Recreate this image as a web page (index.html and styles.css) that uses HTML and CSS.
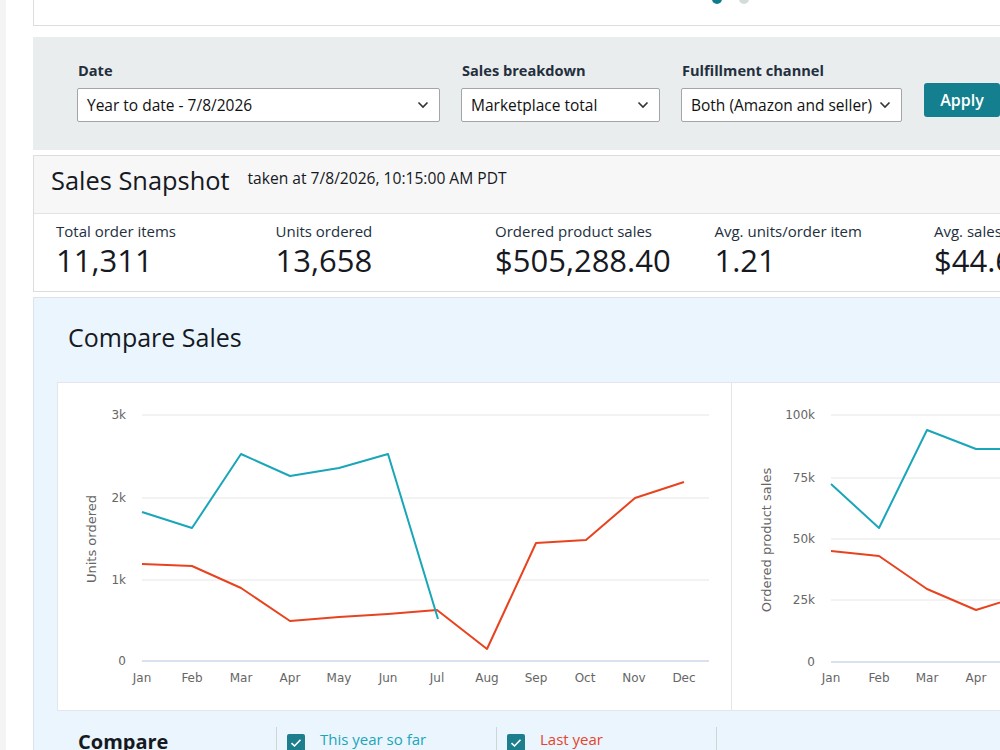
FILE: index.html
```html
<!DOCTYPE html>
<html lang="en">
<head>
    <meta charset="UTF-8">
    <meta name="viewport" content="width=device-width, initial-scale=1.0">
    <title>Business Reports - Sales Dashboard</title>
    <link rel="stylesheet" href="styles.css">
</head>
<body>
    <div class="rail"></div>
    <main class="page">
        <div class="promo">
            <div class="dots">
                <span class="dot active"></span>
                <span class="dot"></span>
            </div>
        </div>

        <div class="filters">
            <div class="field">
                <label>Date</label>
                <div class="select date-select">
                    <span>Year to date - 7/8/2026</span>
                    <svg width="12" height="8" viewBox="0 0 12 8"><path d="M1.5 1.5 6 6l4.5-4.5" fill="none" stroke="#333" stroke-width="1.6"/></svg>
                </div>
            </div>
            <div class="field">
                <label>Sales breakdown</label>
                <div class="select breakdown-select">
                    <span>Marketplace total</span>
                    <svg width="12" height="8" viewBox="0 0 12 8"><path d="M1.5 1.5 6 6l4.5-4.5" fill="none" stroke="#333" stroke-width="1.6"/></svg>
                </div>
            </div>
            <div class="field">
                <label>Fulfillment channel</label>
                <div class="select channel-select">
                    <span>Both (Amazon and seller)</span>
                    <svg width="12" height="8" viewBox="0 0 12 8"><path d="M1.5 1.5 6 6l4.5-4.5" fill="none" stroke="#333" stroke-width="1.6"/></svg>
                </div>
            </div>
            <button class="apply">Apply</button>
        </div>

        <section class="snapshot">
            <div class="snapshot-head">
                <h2>Sales Snapshot</h2>
                <span class="taken">taken at 7/8/2026, 10:15:00 AM PDT</span>
            </div>
            <div class="metrics">
                <div class="metric">
                    <div class="metric-label">Total order items</div>
                    <div class="metric-value">11,311</div>
                </div>
                <div class="metric">
                    <div class="metric-label">Units ordered</div>
                    <div class="metric-value">13,658</div>
                </div>
                <div class="metric">
                    <div class="metric-label">Ordered product sales</div>
                    <div class="metric-value">$505,288.40</div>
                </div>
                <div class="metric">
                    <div class="metric-label">Avg. units/order item</div>
                    <div class="metric-value">1.21</div>
                </div>
                <div class="metric">
                    <div class="metric-label">Avg. sales/order item</div>
                    <div class="metric-value">$44.67</div>
                </div>
            </div>
        </section>

        <section class="compare">
            <h2>Compare Sales</h2>
            <div class="charts">
                <div class="chart">
                    <svg width="673" height="327" viewBox="0 0 673 327">
                        <g class="grid">
                            <line x1="84" y1="32" x2="651" y2="32"/>
                            <line x1="84" y1="115" x2="651" y2="115"/>
                            <line x1="84" y1="197" x2="651" y2="197"/>
                        </g>
                        <line class="axis" x1="84" y1="278" x2="651" y2="278"/>
                        <g class="ylabels">
                            <text x="68" y="36">3k</text>
                            <text x="68" y="119">2k</text>
                            <text x="68" y="201">1k</text>
                            <text x="68" y="282">0</text>
                        </g>
                        <text class="ytitle" transform="translate(38 156) rotate(-90)">Units ordered</text>
                        <g class="xlabels">
                            <text x="84" y="299">Jan</text>
                            <text x="134" y="299">Feb</text>
                            <text x="183" y="299">Mar</text>
                            <text x="232" y="299">Apr</text>
                            <text x="281" y="299">May</text>
                            <text x="330" y="299">Jun</text>
                            <text x="379" y="299">Jul</text>
                            <text x="429" y="299">Aug</text>
                            <text x="478" y="299">Sep</text>
                            <text x="527" y="299">Oct</text>
                            <text x="576" y="299">Nov</text>
                            <text x="626" y="299">Dec</text>
                        </g>
                        <polyline class="series last" points="84,181 134,183 183,205 232,238 281,234 330,231 379,227 429,266 478,160 528,157 577,115 626,99"/>
                        <polyline class="series current" points="84,129 134,145 183,71 232,93 281,85 330,71 380,236"/>
                    </svg>
                </div>
                <div class="chart">
                    <svg width="673" height="327" viewBox="0 0 673 327">
                        <g class="grid">
                            <line x1="99" y1="32" x2="666" y2="32"/>
                            <line x1="99" y1="95" x2="666" y2="95"/>
                            <line x1="99" y1="156" x2="666" y2="156"/>
                            <line x1="99" y1="217" x2="666" y2="217"/>
                        </g>
                        <line class="axis" x1="99" y1="279" x2="666" y2="279"/>
                        <g class="ylabels">
                            <text x="83" y="36">100k</text>
                            <text x="83" y="99">75k</text>
                            <text x="83" y="160">50k</text>
                            <text x="83" y="221">25k</text>
                            <text x="83" y="283">0</text>
                        </g>
                        <text class="ytitle" transform="translate(39 157) rotate(-90)">Ordered product sales</text>
                        <g class="xlabels">
                            <text x="99" y="299">Jan</text>
                            <text x="147" y="299">Feb</text>
                            <text x="195" y="299">Mar</text>
                            <text x="244" y="299">Apr</text>
                            <text x="292" y="299">May</text>
                            <text x="340" y="299">Jun</text>
                            <text x="389" y="299">Jul</text>
                            <text x="437" y="299">Aug</text>
                            <text x="485" y="299">Sep</text>
                            <text x="534" y="299">Oct</text>
                            <text x="582" y="299">Nov</text>
                            <text x="630" y="299">Dec</text>
                        </g>
                        <polyline class="series last" points="99,168 147,173 195,206 244,227 292,212 340,200 389,228 437,262 485,158 534,150 582,120 630,105"/>
                        <polyline class="series current" points="99,101 147,145 195,47 244,66 292,66 340,80 389,235"/>
                    </svg>
                </div>
            </div>

            <div class="compare-row">
                <div class="compare-title">Compare</div>
                <label class="option current-year">
                    <span class="check"><svg width="12" height="10" viewBox="0 0 12 10"><path d="M1.5 5.2 4.5 8 10.5 1.8" fill="none" stroke="#fff" stroke-width="1.6"/></svg></span>
                    <span>This year so far</span>
                </label>
                <label class="option last-year">
                    <span class="check"><svg width="12" height="10" viewBox="0 0 12 10"><path d="M1.5 5.2 4.5 8 10.5 1.8" fill="none" stroke="#fff" stroke-width="1.6"/></svg></span>
                    <span>Last year</span>
                </label>
                <div class="option"></div>
            </div>
        </section>
    </main>
</body>
</html>
```

FILE: styles.css
```css
body {
    font-family: 'Open Sans', sans-serif;
    margin: 0;
    padding: 0;
    background-color: #fff;
    color: #16191f;
    display: flex;
    overflow: hidden;
    height: 750px;
}
.rail {
    width: 6px;
    flex: none;
    background-color: #f4f4f4;
}
.page {
    margin-left: 27px;
    width: 1100px;
    flex: none;
}

/* carousel card, scrolled mostly out of view */
.promo {
    display: flow-root;
    height: 25px;
    border: 1px solid #ddd;
    border-top: none;
    background: #fff;
}
.dots {
    display: flex;
    gap: 17px;
    margin-top: -6px;
    padding-left: 678px;
}
.dot {
    width: 10px;
    height: 10px;
    border-radius: 50%;
    background-color: #d5dbdb;
}
.dot.active {
    background-color: #0e7c8c;
}

/* filter bar */
.filters {
    margin-top: 11px;
    background-color: #eaeded;
    height: 113px;
    box-sizing: border-box;
    padding: 23px 0 0 44px;
    display: flex;
    gap: 21px;
}
.field {
    display: flex;
    flex-direction: column;
    gap: 8px;
}
.field label {
    font-size: 14.6px;
    font-weight: 700;
    line-height: 20px;
    color: #232f3e;
    padding-left: 1px;
}
.select {
    height: 34px;
    box-sizing: border-box;
    border: 1px solid #a2a6a6;
    border-radius: 2px;
    background: #fff;
    display: flex;
    align-items: center;
    justify-content: space-between;
    padding: 0 10px 0 9px;
    font-size: 15.5px;
    color: #111;
}
.date-select { width: 363px; }
.breakdown-select { width: 199px; }
.channel-select { width: 221px; }
.apply {
    align-self: flex-start;
    margin-top: 23px;
    margin-left: 1px;
    height: 34px;
    width: 76px;
    border: none;
    border-radius: 3px;
    background-color: #147f8e;
    color: #fff;
    font-family: inherit;
    font-size: 16px;
    font-weight: 600;
}

/* snapshot */
.snapshot {
    margin-top: 5px;
    border: 1px solid #ddd;
}
.snapshot-head {
    height: 58px;
    box-sizing: border-box;
    background-color: #f7f7f7;
    border-bottom: 1px solid #e3e3e3;
    display: flex;
    align-items: flex-start;
    gap: 18px;
    padding: 7px 17px 0;
}
.snapshot-head h2 {
    margin: 0;
    font-size: 25.4px;
    font-weight: 400;
    line-height: 34px;
    color: #16191f;
}
.taken {
    font-size: 15.6px;
    line-height: 20px;
    padding-top: 5px;
}
.metrics {
    display: grid;
    grid-template-columns: repeat(5, 219.5px);
    padding: 7px 0 0 22px;
    height: 77px;
    box-sizing: border-box;
}
.metric {
    display: flex;
    flex-direction: column;
    gap: 1px;
}
.metric-label {
    font-size: 15px;
    line-height: 20px;
    color: #232f3e;
}
.metric-value {
    font-size: 31px;
    line-height: 36px;
    color: #16191f;
}

/* compare sales */
.compare {
    margin-top: 5px;
    border-top: 1px solid #dde3e8;
    border-left: 1px solid #dde3e8;
    background-color: #eaf5fd;
    padding: 22px 0 0 23px;
    height: 460px;
}
.compare h2 {
    margin: 0 0 28px 11px;
    font-size: 25px;
    font-weight: 400;
    line-height: 34px;
    color: #16191f;
}
.charts {
    display: flex;
    background: #fff;
    border: 1px solid #e1e7ed;
    height: 327px;
}
.chart {
    width: 673px;
    flex: none;
}
.chart + .chart {
    border-left: 1px solid #e1e4e8;
}
.chart svg {
    display: block;
    font-family: 'DejaVu Sans', sans-serif;
}
.grid line {
    stroke: #e6e6e6;
    stroke-width: 1;
}
.axis {
    stroke: #ccd6eb;
    stroke-width: 1.5;
}
.ylabels text {
    font-size: 12px;
    fill: #666;
    text-anchor: end;
}
.xlabels text {
    font-size: 12px;
    fill: #666;
    text-anchor: middle;
}
.ytitle {
    font-size: 13px;
    fill: #666;
    text-anchor: middle;
}
.series {
    fill: none;
    stroke-width: 2;
    stroke-linejoin: round;
}
.series.current { stroke: #19a6b8; }
.series.last { stroke: #e8431f; }

.compare-row {
    display: grid;
    grid-template-columns: 219px repeat(3, 220px);
    margin-top: 16px;
    height: 60px;
}
.compare-title {
    font-size: 20px;
    font-weight: 700;
    line-height: 28px;
    color: #16191f;
    padding: 0 0 0 21px;
    margin-top: 1px;
}
.option {
    border-left: 1px solid #cfd4d9;
    display: flex;
    align-items: flex-start;
    gap: 15px;
    padding-left: 10px;
    font-size: 15px;
    line-height: 20px;
    padding-top: 2px;
}
.check {
    width: 18px;
    height: 18px;
    margin-top: 5px;
    border-radius: 2px;
    background-color: #1d7f8d;
    display: flex;
    align-items: center;
    justify-content: center;
}
.current-year { color: #1ba5b9; }
.last-year { color: #e8432b; }
```
